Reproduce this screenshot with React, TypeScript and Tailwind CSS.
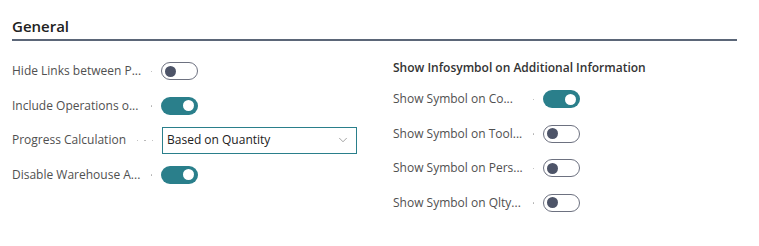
import { ChevronDown } from 'lucide-react';

type Row = { label: string; on: boolean };

const leftRows: Row[] = [
  { label: 'Hide Links between P...', on: false },
  { label: 'Include Operations o...', on: true },
];

const rightRows: Row[] = [
  { label: 'Show Symbol on Co...', on: true },
  { label: 'Show Symbol on Tool...', on: false },
  { label: 'Show Symbol on Pers...', on: false },
  { label: 'Show Symbol on Qlty...', on: false },
];

function Toggle({ on }: { on: boolean }): JSX.Element {
  if (on) {
    return (
      <span className="flex h-[18px] w-[37px] items-center justify-end rounded-full bg-[#2a7f8b] pr-[4px]">
        <span className="h-[11px] w-[11px] rounded-full bg-white" />
      </span>
    );
  }
  return (
    <span className="flex h-[18px] w-[37px] items-center rounded-full border-[1.5px] border-[#6d7180] bg-white pl-[3px]">
      <span className="h-[11px] w-[11px] rounded-full bg-[#4d5468]" />
    </span>
  );
}

function Label({ text, width, dots }: { text: string; width: string; dots: number }): JSX.Element {
  return (
    <div className={`flex shrink-0 items-center justify-between pr-[9px] ${width}`}>
      <span className="whitespace-nowrap text-[12px] text-[#505050]">{text}</span>
      <span className="flex gap-[6px]">
        {Array.from({ length: dots }, (_, i) => (
          <span key={i} className="h-[1.5px] w-[1.5px] rounded-full bg-[#b0b0b0]" />
        ))}
      </span>
    </div>
  );
}

export default function App(): JSX.Element {
  return (
    <div className="h-[246px] w-[759px] bg-white pt-[16px] pl-[12px] pr-[22px] font-['Open_Sans',sans-serif]">
      <h2 className="border-b-2 border-[#5b6678] pb-[3px] text-[15px] leading-[20px] font-semibold text-[#212121]">General</h2>
      <div className="mt-[13px] flex">
        <div className="w-[381px] shrink-0">
          {leftRows.map((row) => (
            <div key={row.label} className="flex h-[34.5px] items-center">
              <Label text={row.label} width="w-[149px]" dots={1} />
              <Toggle on={row.on} />
            </div>
          ))}
          <div className="flex h-[34.5px] items-center">
            <Label text="Progress Calculation" width="w-[150px]" dots={3} />
            <div className="flex h-[27px] w-[195px] items-center justify-between border border-[#2a7f8b] pl-[4px] pr-[6px] text-[12px] text-[#212121]">
              <span>Based on Quantity</span>
              <ChevronDown className="h-[14px] w-[14px] text-[#707070]" strokeWidth={1.1} />
            </div>
          </div>
          <div className="flex h-[34.5px] items-center">
            <Label text="Disable Warehouse A..." width="w-[149px]" dots={1} />
            <Toggle on={true} />
          </div>
        </div>
        <div className="flex-1">
          <div className="flex h-[28px] items-center text-[12px] font-semibold text-[#333333]">
            Show Infosymbol on Additional Information
          </div>
          {rightRows.map((row) => (
            <div key={row.label} className="flex h-[34.5px] items-center">
              <Label text={row.label} width="w-[150px]" dots={1} />
              <Toggle on={row.on} />
            </div>
          ))}
        </div>
      </div>
    </div>
  );
}
